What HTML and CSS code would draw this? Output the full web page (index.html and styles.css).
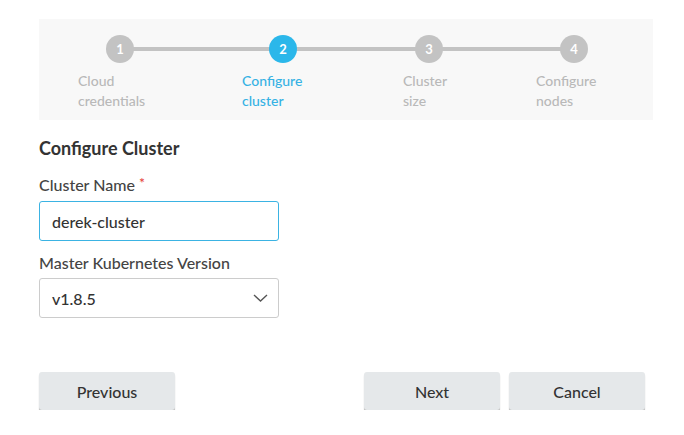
FILE: index.html
```html
<!DOCTYPE html>
<html>
<head>
<meta charset="utf-8">
<link rel="stylesheet" href="styles.css">
</head>
<body>
<div class="page">
  <div class="wizard">
    <ol class="steps">
      <li class="step step-cloud">
        <span class="dot">1</span>
        <span class="label">Cloud<br>credentials</span>
      </li>
      <li class="step step-config is-active">
        <span class="dot">2</span>
        <span class="label">Configure<br>cluster</span>
      </li>
      <li class="step step-size">
        <span class="dot">3</span>
        <span class="label">Cluster<br>size</span>
      </li>
      <li class="step step-nodes">
        <span class="dot">4</span>
        <span class="label">Configure<br>nodes</span>
      </li>
    </ol>
  </div>

  <h2 class="title">Configure Cluster</h2>

  <div class="field">
    <label class="field-label">Cluster Name <span class="req">*</span></label>
    <div class="input is-focused">derek-cluster</div>
  </div>

  <div class="field field-second">
    <label class="field-label">Master Kubernetes Version</label>
    <div class="input select">
      <span>v1.8.5</span>
      <svg class="chev" width="15" height="8" viewBox="0 0 15 8"><path d="M1 1 L7.5 7 L14 1" fill="none" stroke="#555" stroke-width="1.4"/></svg>
    </div>
  </div>

  <div class="actions">
    <button class="btn">Previous</button>
    <div class="actions-right">
      <button class="btn">Next</button>
      <button class="btn">Cancel</button>
    </div>
  </div>
</div>
</body>
</html>
```

FILE: styles.css
```css
* { box-sizing: border-box; }
html, body { margin: 0; padding: 0; background: #fff; }
body {
  font-family: Lato, "Open Sans", "Liberation Sans", sans-serif;
  font-weight: 500;
  color: #333;
}
.page {
  padding: 19px 0 0 39px;
  width: 653px;
}
.wizard {
  background: #f8f8f8;
  height: 101px;
  padding: 16px 0 0 39px;
}
.steps {
  list-style: none;
  margin: 0;
  padding: 0;
  display: grid;
  grid-template-columns: 164px 161px 133px 1fr;
  position: relative;
}
.steps::before {
  content: "";
  position: absolute;
  left: 42px;
  width: 454px;
  top: 12px;
  height: 4px;
  background: #c3c3c3;
}
.step {
  display: flex;
  flex-direction: column;
  align-items: flex-start;
  position: relative;
}
.dot {
  width: 28px;
  height: 28px;
  border-radius: 50%;
  background: #c3c3c3;
  color: #fff;
  font-weight: 700;
  font-size: 13px;
  display: flex;
  align-items: center;
  justify-content: center;
  position: relative;
}
.step-cloud .dot { margin-left: 28px; }
.step-config .dot { margin-left: 27px; }
.step-size .dot { margin-left: 12px; }
.step-nodes .dot { margin-left: 24px; }
.label {
  margin-top: 8px;
  font-size: 14px;
  line-height: 19.5px;
  color: #b9b9b9;
}
.is-active .dot { background: #2bb7ea; }
.is-active .label { color: #36b2e4; }

.title {
  margin: 17px 0 0;
  font-size: 18px;
  line-height: 22px;
  font-weight: 700;
  color: #333;
}
.field { margin-top: 16px; }
.field-second { margin-top: 12px; }
.field-label {
  display: block;
  font-size: 16px;
  line-height: 20px;
  color: #444;
}
.req { color: #e53935; font-size: 14px; line-height: 0; vertical-align: 3px; }
.input {
  margin-top: 6px;
  width: 240px;
  height: 40px;
  border: 1px solid #ccc;
  border-radius: 3px;
  padding: 0 12px;
  font-size: 16px;
  color: #333;
  display: flex;
  align-items: center;
}
.field-second .input { margin-top: 5px; }
.input.is-focused { border-color: #3bb3e3; }
.select { justify-content: space-between; padding-right: 10px; }
.chev { display: block; }

.actions {
  margin-top: 54px;
  width: 606px;
  display: flex;
  justify-content: space-between;
}
.actions-right { display: flex; gap: 9px; }
.btn {
  width: 136px;
  height: 38px;
  border: none;
  border-radius: 3px;
  background: #e5e8ea;
  box-shadow: 0 2px 1px rgba(0,0,0,0.28);
  font-family: Lato, "Open Sans", "Liberation Sans", sans-serif;
  font-weight: 500;
  font-size: 16px;
  color: #333;
  padding: 0;
}
```
